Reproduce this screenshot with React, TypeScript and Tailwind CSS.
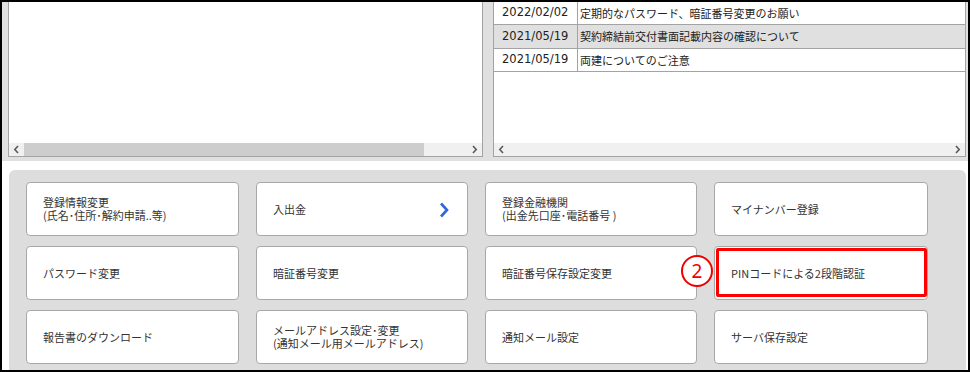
import React from "react";

const CJK = '"Noto Sans CJK JP", "Noto Sans", sans-serif';

function Arrow({ dir }: { dir: "l" | "r" }) {
  return (
    <svg width="7" height="9" viewBox="0 0 7 9">
      <path
        d={dir === "l" ? "M5 1 L1.8 4.5 L5 8" : "M2 1 L5.2 4.5 L2 8"}
        fill="none"
        stroke="#5a5a5a"
        strokeWidth="1.6"
      />
    </svg>
  );
}

function HScroll({ thumb }: { thumb?: boolean }) {
  return (
    <div className="h-[13px] bg-[#f0f0f0] flex items-center shrink-0">
      <div className="w-[15px] flex justify-center">
        <Arrow dir="l" />
      </div>
      <div className="flex-1 h-full">
        {thumb ? <div className="h-full w-[400px] bg-[#cdcdcd]" /> : null}
      </div>
      <div className="w-[15px] flex justify-center">
        <Arrow dir="r" />
      </div>
    </div>
  );
}

const news = [
  { d: "2022/02/02", t: "定期的なパスワード、暗証番号変更のお願い", h: "h-[23px]", bg: "bg-white" },
  { d: "2021/05/19", t: "契約締結前交付書面記載内容の確認について", h: "h-[24px]", bg: "bg-[#e0e0e0]" },
  { d: "2021/05/19", t: "両建についてのご注意", h: "h-[23px]", bg: "bg-white" },
];

type Btn = { lines: string[]; chevron?: boolean; highlight?: boolean };

const buttons: Btn[] = [
  { lines: ["登録情報変更", "(氏名･住所･解約申請..等)"] },
  { lines: ["入出金"], chevron: true },
  { lines: ["登録金融機関", "(出金先口座･電話番号 )"] },
  { lines: ["マイナンバー登録"] },
  { lines: ["パスワード変更"] },
  { lines: ["暗証番号変更"] },
  { lines: ["暗証番号保存設定変更"] },
  { lines: ["PINコードによる2段階認証"], highlight: true },
  { lines: ["報告書のダウンロード"] },
  { lines: ["メールアドレス設定･変更", "(通知メール用メールアドレス)"] },
  { lines: ["通知メール設定"] },
  { lines: ["サーバ保存設定"] },
];

export default function App() {
  return (
    <div
      className="w-[970px] h-[372px] border-2 border-black bg-white overflow-hidden flex flex-col"
      style={{ fontFamily: CJK }}
    >
      {/* top panels */}
      <div className="h-[159px] bg-[#e0e0e0] pl-[6px] flex gap-[10px] shrink-0">
        <div className="w-[475px] h-[155px] bg-white border-x border-b border-[#a3a3a3] flex flex-col">
          <div className="flex-1" />
          <HScroll thumb />
        </div>
        <div className="w-[473px] h-[155px] bg-white border-x border-b border-[#a3a3a3] flex flex-col">
          <div className="flex flex-col">
            {news.map((n, i) => (
              <div
                key={i}
                className={`${n.h} ${n.bg} border-b border-[#a3a3a3] flex items-center text-[#222]`}
              >
                <div
                  className="w-[84px] h-full border-r border-[#a3a3a3] flex items-center pl-[8px] text-[11.5px]"
                  style={{ fontFamily: '"DejaVu Sans", "Noto Sans", sans-serif' }}
                >
                  {n.d}
                </div>
                <div className="pl-[2px] text-[11px] leading-none">{n.t}</div>
              </div>
            ))}
          </div>
          <div className="flex-1" />
          <HScroll />
        </div>
      </div>

      <div className="h-[9px] shrink-0" />

      {/* menu container */}
      <div className="ml-[7px] w-[957px] flex-1 bg-[#dddddd] rounded-t-[6px] pt-[12px] pl-[17px]">
        <div className="grid grid-cols-[213px_212px_212px_214px] gap-x-[17px] gap-y-[10px] auto-rows-[54px]">
          {buttons.map((b, i) => (
            <div
              key={i}
              className="relative bg-white border border-[#a8a8a8] rounded-[4px] flex items-center pl-[16px] pr-[20px] text-[11px] leading-[13px] text-[#333]"
            >
              <p className="whitespace-nowrap">
                {b.lines.map((l, j) => (
                  <React.Fragment key={j}>
                    {j > 0 ? <br /> : null}
                    {l}
                  </React.Fragment>
                ))}
              </p>
              {b.chevron ? (
                <svg
                  className="absolute left-[182px] top-[19px]"
                  width="10"
                  height="16"
                  viewBox="0 0 10 16"
                >
                  <path d="M2 1.5 L8 8 L2 14.5" fill="none" stroke="#2f67d8" strokeWidth="2.6" />
                </svg>
              ) : null}
              {b.highlight ? (
                <>
                  <div className="absolute top-[1px] left-[1px] right-[0px] bottom-[2px] border-[3px] border-[#ff0000] rounded-[2px] pointer-events-none" />
                  <div
                    className="absolute left-[-34px] top-[8px] w-[32px] h-[32px] rounded-full border-[2.5px] border-[#ee0000] bg-white flex items-center justify-center text-[#ee0000] text-[19px] leading-none"
                    style={{ fontFamily: '"Noto Sans", sans-serif' }}
                  >
                    2
                  </div>
                </>
              ) : null}
            </div>
          ))}
        </div>
      </div>
    </div>
  );
}
